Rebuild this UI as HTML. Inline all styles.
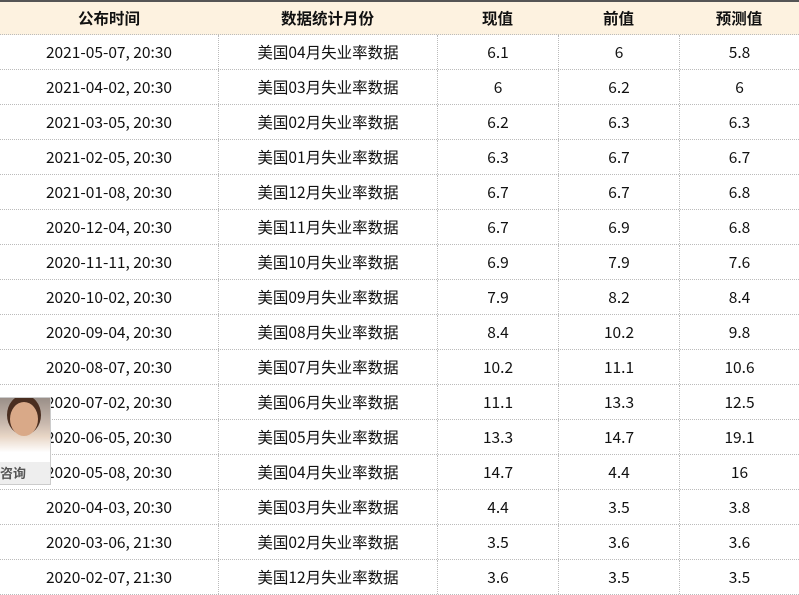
<!DOCTYPE html>
<html><head><meta charset="utf-8"><style>
body{margin:0;width:799px;height:593px;overflow:hidden;background:#fff;font-family:"Noto Sans CJK SC",sans-serif;}
.top{height:2px;background:#555;}
.r{display:flex;height:34px;border-bottom:1px dotted #bbb;}
.r div{height:34px;line-height:34px;font-size:15.5px;color:#111;text-align:center;border-left:1px dotted #bbb;box-sizing:border-box;}
.r div:first-child{border-left:none}
.h{height:32px;background:#fdf2e0;}
.h div{height:32px;line-height:32px;font-weight:bold;border-left:none;}
.c1{width:218px}.c2{width:219px}.c3,.c4{width:121px}.c5{width:120px}
.w{position:absolute;left:0;top:397px;width:50px;height:86px;background:#eee;border:1px solid #ccc;border-left:none;}
.ph{height:64px;background:linear-gradient(#9a8f88,#c9b9ae 40%,#e8d6c6 60%,#fff 85%);position:relative;overflow:hidden}
.ph:before{content:"";position:absolute;left:10px;top:4px;width:28px;height:34px;border-radius:50%;background:#d9a988;box-shadow:0 -4px 0 3px #4a2e20;}
.w span{display:block;font-size:13px;color:#555;font-weight:bold;line-height:22px;}
</style></head><body>
<div class="top"></div>
<div class="r h"><div class="c1">公布时间</div><div class="c2">数据统计月份</div><div class="c3">现值</div><div class="c4">前值</div><div class="c5">预测值</div></div>
<div class="r"><div class="c1">2021-05-07, 20:30</div><div class="c2">美国04月失业率数据</div><div class="c3">6.1</div><div class="c4">6</div><div class="c5">5.8</div></div>
<div class="r"><div class="c1">2021-04-02, 20:30</div><div class="c2">美国03月失业率数据</div><div class="c3">6</div><div class="c4">6.2</div><div class="c5">6</div></div>
<div class="r"><div class="c1">2021-03-05, 20:30</div><div class="c2">美国02月失业率数据</div><div class="c3">6.2</div><div class="c4">6.3</div><div class="c5">6.3</div></div>
<div class="r"><div class="c1">2021-02-05, 20:30</div><div class="c2">美国01月失业率数据</div><div class="c3">6.3</div><div class="c4">6.7</div><div class="c5">6.7</div></div>
<div class="r"><div class="c1">2021-01-08, 20:30</div><div class="c2">美国12月失业率数据</div><div class="c3">6.7</div><div class="c4">6.7</div><div class="c5">6.8</div></div>
<div class="r"><div class="c1">2020-12-04, 20:30</div><div class="c2">美国11月失业率数据</div><div class="c3">6.7</div><div class="c4">6.9</div><div class="c5">6.8</div></div>
<div class="r"><div class="c1">2020-11-11, 20:30</div><div class="c2">美国10月失业率数据</div><div class="c3">6.9</div><div class="c4">7.9</div><div class="c5">7.6</div></div>
<div class="r"><div class="c1">2020-10-02, 20:30</div><div class="c2">美国09月失业率数据</div><div class="c3">7.9</div><div class="c4">8.2</div><div class="c5">8.4</div></div>
<div class="r"><div class="c1">2020-09-04, 20:30</div><div class="c2">美国08月失业率数据</div><div class="c3">8.4</div><div class="c4">10.2</div><div class="c5">9.8</div></div>
<div class="r"><div class="c1">2020-08-07, 20:30</div><div class="c2">美国07月失业率数据</div><div class="c3">10.2</div><div class="c4">11.1</div><div class="c5">10.6</div></div>
<div class="r"><div class="c1">2020-07-02, 20:30</div><div class="c2">美国06月失业率数据</div><div class="c3">11.1</div><div class="c4">13.3</div><div class="c5">12.5</div></div>
<div class="r"><div class="c1">2020-06-05, 20:30</div><div class="c2">美国05月失业率数据</div><div class="c3">13.3</div><div class="c4">14.7</div><div class="c5">19.1</div></div>
<div class="r"><div class="c1">2020-05-08, 20:30</div><div class="c2">美国04月失业率数据</div><div class="c3">14.7</div><div class="c4">4.4</div><div class="c5">16</div></div>
<div class="r"><div class="c1">2020-04-03, 20:30</div><div class="c2">美国03月失业率数据</div><div class="c3">4.4</div><div class="c4">3.5</div><div class="c5">3.8</div></div>
<div class="r"><div class="c1">2020-03-06, 21:30</div><div class="c2">美国02月失业率数据</div><div class="c3">3.5</div><div class="c4">3.6</div><div class="c5">3.6</div></div>
<div class="r"><div class="c1">2020-02-07, 21:30</div><div class="c2">美国12月失业率数据</div><div class="c3">3.6</div><div class="c4">3.5</div><div class="c5">3.5</div></div>
<div class="w"><div class="ph"></div><span>咨询</span></div>
</body></html>
